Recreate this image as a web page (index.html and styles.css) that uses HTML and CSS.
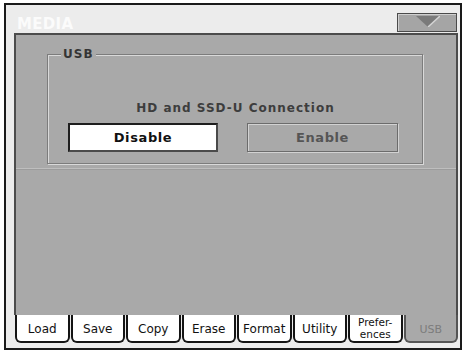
FILE: index.html
```html
<!DOCTYPE html>
<html>
<head>
<meta charset="utf-8">
<link rel="stylesheet" href="styles.css">
</head>
<body>
<div class="frame">
  <div class="header">
    <span class="title">MEDIA</span>
    <div class="menu-btn">
      <svg width="24" height="11" viewBox="0 0 24 11"><polygon points="0,0 24,0 12,11" fill="#7a7a7a"/><polyline points="24,0 12,11" stroke="#d4d4d4" stroke-width="1.5" fill="none"/></svg>
    </div>
  </div>
  <div class="panel">
    <div class="group">
      <span class="legend">USB</span>
      <div class="caption">HD and SSD-U Connection</div>
      <div class="buttons">
        <div class="btn btn-on">Disable</div>
        <div class="btn btn-off">Enable</div>
      </div>
    </div>
    <div class="separator"></div>
  </div>
  <div class="tabs">
    <div class="tab">Load</div>
    <div class="tab">Save</div>
    <div class="tab">Copy</div>
    <div class="tab">Erase</div>
    <div class="tab">Format</div>
    <div class="tab">Utility</div>
    <div class="tab tab-two"><span>Prefer-</span><span>ences</span></div>
    <div class="tab tab-active">USB</div>
  </div>
</div>
</body>
</html>
```
FILE: styles.css
```css
html, body {
  margin: 0;
  padding: 0;
  background: #ffffff;
}
body {
  width: 467px;
  height: 354px;
  overflow: hidden;
  font-family: "DejaVu Sans", sans-serif;
}
.frame {
  margin: 3px 0 0 4px;
  width: 454px;
  height: 343px;
  border: 2px solid #1a1a1a;
  background: #ececec;
  display: flex;
  flex-direction: column;
}
.header {
  height: 28px;
  display: flex;
  justify-content: space-between;
  align-items: flex-start;
  padding: 0 3px 0 11px;
  box-sizing: border-box;
}
.title {
  color: #fbfbfb;
  font-weight: bold;
  font-size: 15px;
  line-height: 18px;
  margin-top: 10px;
  letter-spacing: 0.3px;
}
.menu-btn {
  margin-top: 8px;
  width: 56px;
  height: 17px;
  border: 1px solid #4a4a4a;
  background: #a5a5a5;
  box-shadow: inset 1px 1px 0 #cfcfcf;
  display: flex;
  justify-content: center;
  align-items: center;
  padding-left: 2px;
}
.menu-btn svg { display: block; margin-top: -2px; }
.panel {
  margin-left: 8px;
  width: 440px;
  height: 280px;
  border: 2px solid #4c4c4c;
  border-bottom: none;
  background: #a9a9a9;
  display: flex;
  flex-direction: column;
}
.group {
  position: relative;
  margin: 19px 0 0 31px;
  width: 374px;
  height: 108px;
  border: 1px solid #7c7c7c;
  box-shadow: inset 1px 1px 0 #d9d9d9, 1px 1px 0 #d9d9d9;
  display: flex;
  flex-direction: column;
}
.legend {
  position: absolute;
  top: -7px;
  left: 13px;
  padding: 0 2px;
  background: #a9a9a9;
  font-weight: bold;
  font-size: 12px;
  line-height: 13px;
  letter-spacing: 1px;
  color: #353535;
}
.caption {
  margin-top: 46px;
  text-align: center;
  font-weight: bold;
  font-size: 12px;
  line-height: 14px;
  letter-spacing: 1px;
  color: #3d3d3d;
  padding-left: 1px;
}
.buttons {
  display: flex;
  margin: 8px 0 0 20px;
  gap: 29px;
}
.btn {
  height: 29px;
  box-sizing: border-box;
  display: flex;
  align-items: center;
  justify-content: center;
  font-weight: bold;
  font-size: 13px;
  letter-spacing: 0.6px;
}
.btn-on {
  width: 150px;
  background: #ffffff;
  border: 2px solid #1e1e1e;
  border-right-color: #4a4a4a;
  border-bottom-color: #4a4a4a;
  color: #111;
}
.btn-off {
  width: 151px;
  background: #a9a9a9;
  border: 1px solid #6c6c6c;
  box-shadow: inset 1px 1px 0 #d2d2d2, 1px 1px 0 #d2d2d2;
  color: #555;
}
.separator {
  margin-top: 4px;
  height: 1px;
  background: #bebebe;
  border-bottom: 1px solid #9c9c9c;
}
.tabs {
  margin-left: 9px;
  width: 443px;
  height: 28px;
  display: grid;
  grid-template-columns: repeat(8, 1fr);
  gap: 1px;
}
.tab {
  background: #ffffff;
  border: 2px solid #141414;
  border-top: none;
  border-radius: 0 0 6px 6px;
  display: flex;
  align-items: center;
  justify-content: center;
  font-size: 12px;
  line-height: 13px;
  color: #111;
  padding-top: 2px;
}
.tab-two {
  flex-direction: column;
  font-size: 10.5px;
  line-height: 12px;
  padding-top: 0;
}
.tab-two span { display: block; height: 12px; }
.tab-active {
  background: #a9a9a9;
  border-color: #555;
  color: #7c7c7c;
  font-size: 11px;
}
```
